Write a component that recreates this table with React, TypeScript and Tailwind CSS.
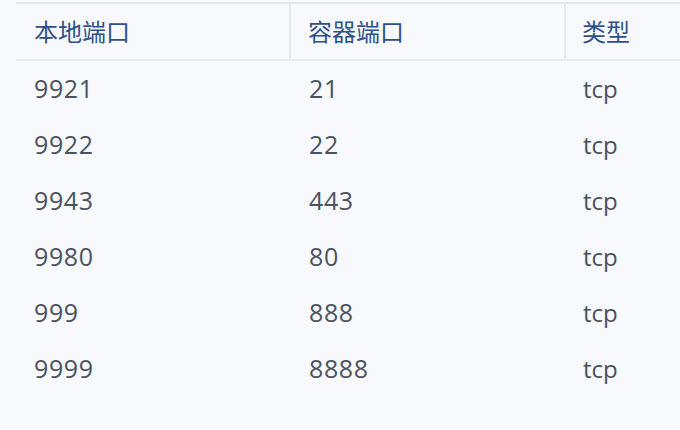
const rows = [
  { local: '9921', container: '21', type: 'tcp' },
  { local: '9922', container: '22', type: 'tcp' },
  { local: '9943', container: '443', type: 'tcp' },
  { local: '9980', container: '80', type: 'tcp' },
  { local: '999', container: '888', type: 'tcp' },
  { local: '9999', container: '8888', type: 'tcp' },
];

export default function App() {
  return (
    <div
      className="h-[430px] w-[680px] overflow-hidden bg-[#f8f9fd] pt-[2px] pl-4"
      style={{ fontFamily: '"Open Sans", "Noto Sans CJK SC", sans-serif' }}
    >
      <div className="border-t-2 border-[#e3e8ef]">
        {/* Header */}
        <div className="grid h-[57px] grid-cols-[275px_275px_1fr] border-b-2 border-[#e8ecf2] text-[24px] text-[#2e5187]">
          <div className="flex items-center border-r-2 border-[#e4e9f0] pl-[18px]">本地端口</div>
          <div className="flex items-center border-r-2 border-[#e4e9f0] pl-[17px]">容器端口</div>
          <div className="flex items-center pl-[16px]">类型</div>
        </div>

        {/* Body */}
        {rows.map((r) => (
          <div
            key={r.local}
            className="grid h-[56px] grid-cols-[275px_275px_1fr] text-[24px] text-[#4a525d]"
          >
            <div className="flex items-center pl-[18px] text-[25px] tracking-[0.6px]">{r.local}</div>
            <div className="flex items-center pl-[18px] text-[25px] tracking-[0.6px]">{r.container}</div>
            <div className="flex items-center pl-[17px]">{r.type}</div>
          </div>
        ))}
      </div>
    </div>
  );
}
